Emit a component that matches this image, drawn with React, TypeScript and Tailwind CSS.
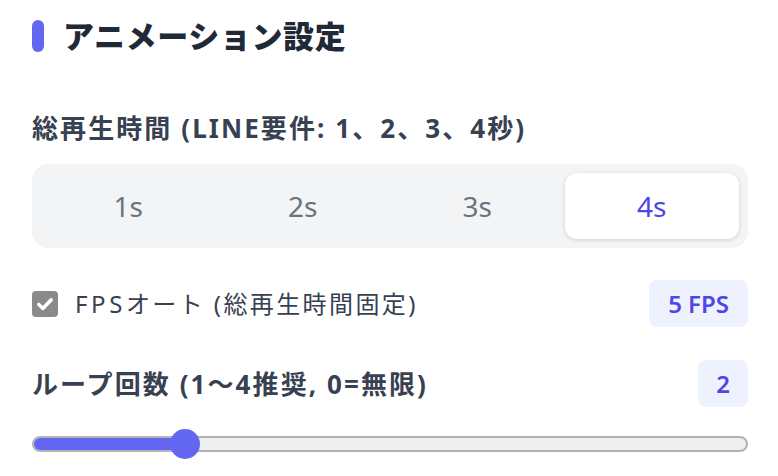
import React, { useState } from 'react';

const durations = [1, 2, 3, 4];

const App: React.FC = () => {
  const [duration, setDuration] = useState(4);
  const [fpsAuto] = useState(true);
  const [loops] = useState(2);
  const maxLoops = 10;
  const pct = loops / maxLoops;

  return (
    <div
      className="w-[778px] h-[476px] overflow-hidden bg-white pl-8 pr-[30px] pt-5"
      style={{ fontFamily: '"Noto Sans", "Noto Sans CJK JP", sans-serif' }}
    >
      {/* heading */}
      <div className="flex items-center gap-[19px] h-8">
        <div className="w-3 h-8 rounded-full bg-[#6366f1]" />
        <h2 className="text-[31px] leading-8 font-black tracking-[0.02em] text-[#1f2937]">アニメーション設定</h2>
      </div>

      {/* duration */}
      <div className="mt-[60px] text-[26px] leading-8 font-bold tracking-[0.08em] text-[#374151]">
        総再生時間 (LINE要件: 1、2、3、4秒)
      </div>
      <div className="mt-5 h-[84px] p-[9px] rounded-2xl bg-[#f3f4f6] grid grid-cols-4">
        {durations.map(d => (
          <button
            key={d}
            type="button"
            onClick={() => setDuration(d)}
            className={
              d === duration
                ? 'rounded-xl bg-white text-[28px] text-[#4f46e5] shadow-[0_1px_4px_rgba(0,0,0,0.15)]'
                : 'rounded-xl text-[28px] text-[#6b7280]'
            }
          >
            {d}s
          </button>
        ))}
      </div>

      {/* fps auto */}
      <div className="mt-8 h-[47px] flex items-center justify-between">
        <label className="flex items-center gap-[17px] text-[24px] tracking-[0.1em] text-[#374151]">
          <span className="w-[26px] h-[26px] rounded-[4px] bg-[#8a8a8a] flex items-center justify-center">
            {fpsAuto && (
              <svg width="20" height="20" viewBox="0 0 16 16" fill="none">
                <path d="M3 8.3l3.3 3.3L13 4.6" stroke="white" strokeWidth="2.8" strokeLinecap="round" strokeLinejoin="round" />
              </svg>
            )}
          </span>
          <span>
            <span className="tracking-[0.15em]">FPS</span>オート (総再生時間固定)
          </span>
        </label>
        <span className="h-[47px] px-[19px] rounded-lg bg-[#eef2ff] text-[#4f46e5] text-[24px] font-semibold flex items-center">
          5 FPS
        </span>
      </div>

      {/* loops */}
      <div className="mt-[33px] h-[47px] flex items-center justify-between">
        <span className="text-[26px] leading-8 font-bold tracking-[0.08em] text-[#374151]">ループ回数 (1〜4推奨, 0=無限)</span>
        <span className="h-[47px] w-[50px] rounded-lg bg-[#eef2ff] text-[#4f46e5] text-[24px] font-semibold flex items-center justify-center">
          {loops}
        </span>
      </div>

      {/* slider */}
      <div className="mt-[21px] relative h-8 flex items-center">
        <div className="w-full h-4 rounded-full bg-[#efefef] border-2 border-[#b3b3b3] overflow-hidden">
          <div
            className="h-full bg-[#6366f1]"
            style={{ width: `calc(${pct * 100}% + ${16 - pct * 32}px)` }}
          />
        </div>
        <div
          className="absolute top-[1px] w-[30px] h-[30px] rounded-full bg-[#6366f1]"
          style={{ left: `calc(${pct * 100}% + ${1 - pct * 32}px)` }}
        />
      </div>
    </div>
  );
};

export default App;
